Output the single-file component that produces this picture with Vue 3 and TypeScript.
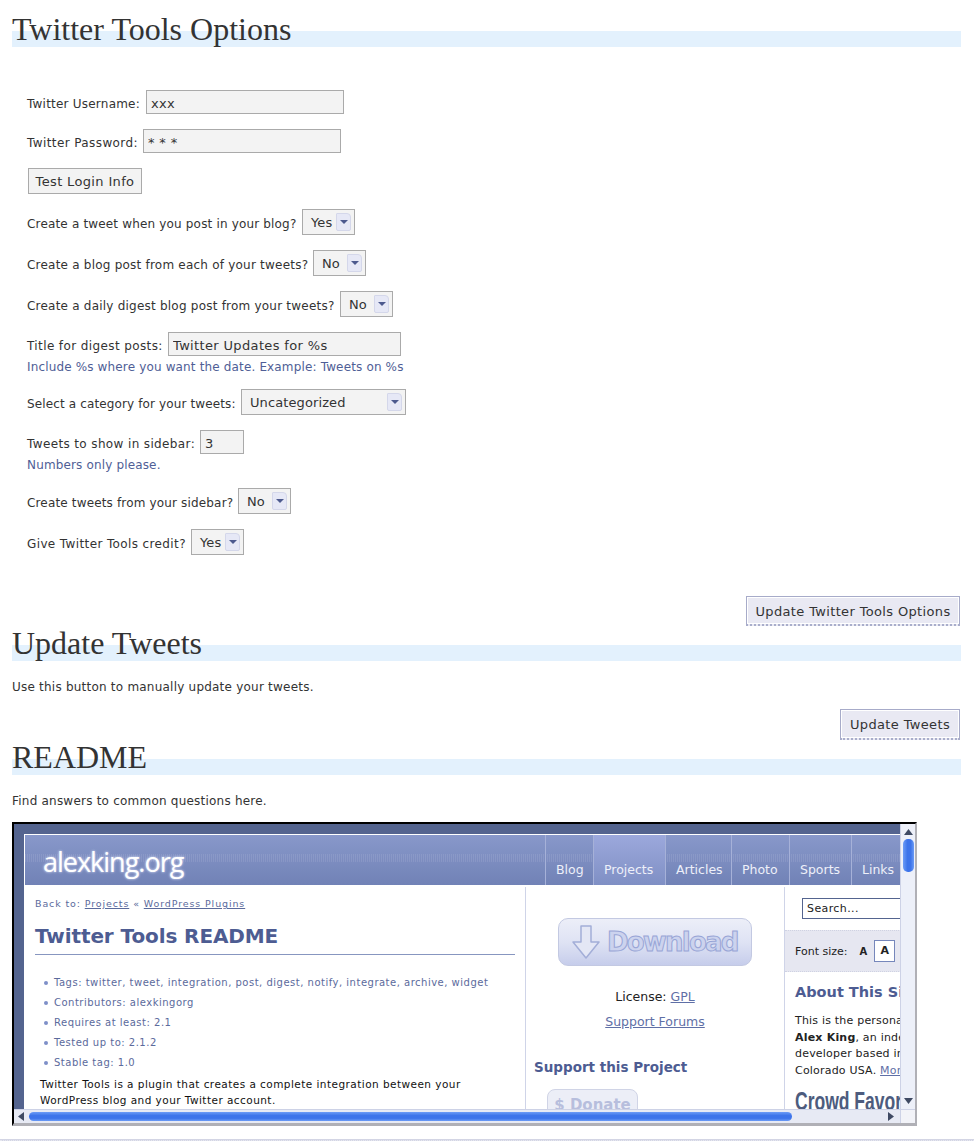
<script setup lang="ts">
interface Campo {
  label: string
  labelWidth: number
  spacing: number
  tipo: 'input' | 'select'
  valor: string
  ancho: number
  ayuda?: string
}

const camposCuenta: Campo[] = [
  { label: 'Twitter Username:', labelWidth: 114, spacing: 0.22, tipo: 'input', valor: 'xxx', ancho: 198 },
  { label: 'Twitter Password:', labelWidth: 111, spacing: 0.4, tipo: 'input', valor: '* * *', ancho: 198 },
]

const campos: Campo[] = [
  { label: 'Create a tweet when you post in your blog?', labelWidth: 270, spacing: 0.17, tipo: 'select', valor: 'Yes', ancho: 53 },
  { label: 'Create a blog post from each of your tweets?', labelWidth: 281, spacing: 0.22, tipo: 'select', valor: 'No', ancho: 53 },
  { label: 'Create a daily digest blog post from your tweets?', labelWidth: 308, spacing: 0.22, tipo: 'select', valor: 'No', ancho: 53 },
  {
    label: 'Title for digest posts:',
    labelWidth: 136,
    spacing: 0.39,
    tipo: 'input',
    valor: 'Twitter Updates for %s',
    ancho: 233,
    ayuda: 'Include %s where you want the date. Example: Tweets on %s',
  },
  { label: 'Select a category for your tweets:', labelWidth: 209, spacing: 0.13, tipo: 'select', valor: 'Uncategorized', ancho: 165 },
  {
    label: 'Tweets to show in sidebar:',
    labelWidth: 168,
    spacing: 0.37,
    tipo: 'input',
    valor: '3',
    ancho: 44,
    ayuda: 'Numbers only please.',
  },
  { label: 'Create tweets from your sidebar?', labelWidth: 206, spacing: 0.16, tipo: 'select', valor: 'No', ancho: 53 },
  { label: 'Give Twitter Tools credit?', labelWidth: 159, spacing: 0.38, tipo: 'select', valor: 'Yes', ancho: 53 },
]

const navItems = [
  { label: 'Blog', width: 48, active: false },
  { label: 'Projects', width: 72, active: true },
  { label: 'Articles', width: 66, active: false },
  { label: 'Photo', width: 58, active: false },
  { label: 'Sports', width: 62, active: false },
  { label: 'Links', width: 60, active: false },
]
const readmeMeta = [
  'Tags: twitter, tweet, integration, post, digest, notify, integrate, archive, widget',
  'Contributors: alexkingorg',
  'Requires at least: 2.1',
  'Tested up to: 2.1.2',
  'Stable tag: 1.0',
]
</script>

<template>
  <main class="main">
    <h2 class="titulo">Twitter Tools Options</h2>

    <form class="formulario" @submit.prevent>
      <div v-for="campo in camposCuenta" :key="campo.label" class="campo">
        <label :style="{ width: campo.labelWidth + 'px', letterSpacing: campo.spacing + 'px' }">{{ campo.label }}</label>
        <input class="input" :style="{ width: campo.ancho + 'px' }" :value="campo.valor" readonly>
      </div>
      <div class="campo">
        <button class="boton" type="button">Test Login Info</button>
      </div>
      <div v-for="campo in campos" :key="campo.label" class="grupo">
        <div class="campo">
          <label :style="{ width: campo.labelWidth + 'px', letterSpacing: campo.spacing + 'px' }">{{ campo.label }}</label>
          <input
            v-if="campo.tipo === 'input'"
            class="input"
            :style="{ width: campo.ancho + 'px' }"
            :value="campo.valor"
            readonly
          >
          <div v-else class="select" :style="{ width: campo.ancho + 'px' }">
            {{ campo.valor }}<span class="flecha"></span>
          </div>
        </div>
        <p v-if="campo.ayuda" class="ayuda">{{ campo.ayuda }}</p>
      </div>
    </form>

    <div class="acciones primera">
      <button class="enviar ancho" type="button">Update Twitter Tools Options</button>
    </div>

    <h2 class="titulo">Update Tweets</h2>
    <p class="texto">Use this button to manually update your tweets.</p>
    <div class="acciones">
      <button class="enviar corto" type="button">Update Tweets</button>
    </div>

    <h2 class="titulo">README</h2>
    <p class="texto">Find answers to common questions here.</p>

    <!-- captura del sitio dentro de un marco con barras de scroll -->
    <div class="marco">
      <div class="vista">
        <div class="pagina">
          <header class="cabecera">
            <div class="logo">alexking.org</div>
            <nav class="nav">
              <a
                v-for="item in navItems"
                :key="item.label"
                :class="{ activo: item.active }"
                :style="{ width: item.width + 'px' }"
              >{{ item.label }}</a>
            </nav>
          </header>
          <div class="columnas">
            <section class="col-a">
              <p class="migas">Back to: <u>Projects</u> « <u>WordPress Plugins</u></p>
              <h3 class="readme">Twitter Tools README</h3>
              <ul class="meta">
                <li v-for="linea in readmeMeta" :key="linea">{{ linea }}</li>
              </ul>
              <p class="parrafo">Twitter Tools is a plugin that creates a complete integration between your<br>WordPress blog and your Twitter account.</p>
            </section>
            <section class="col-b">
              <div class="descarga">
                <svg width="30" height="36" viewBox="0 0 30 36">
                  <path d="M10 2h10v16h8L15 34 2 18h8z" fill="#e4e7f5" stroke="#a3aed8" stroke-width="1.5" stroke-linejoin="round" />
                </svg>
                <span>Download</span>
              </div>
              <p class="licencia">License: <u>GPL</u></p>
              <p class="foro"><u>Support Forums</u></p>
              <h4 class="soporte">Support this Project</h4>
              <div class="donar">$ Donate</div>
            </section>
            <section class="col-c">
              <div class="buscar">Search...</div>
              <div class="fuente">
                <span>Font size:</span>
                <b class="a-chica">A</b>
                <b class="a-grande">A</b>
              </div>
              <div class="sobre">
                <h4>About This Site</h4>
                <p>This is the personal site of<br><b>Alex King</b>, an independent<br>developer based in Denver,<br>Colorado USA. <u>More...</u></p>
                <div class="crowd">Crowd Favorites</div>
              </div>
            </section>
          </div>
        </div>
      </div>

      <div class="scroll-v">
        <svg width="11" height="6" viewBox="0 0 11 6"><path d="M5.5 0 10 6H1z" fill="#3f4a63" /></svg>
        <div class="pulgar-v"></div>
        <svg width="11" height="6" viewBox="0 0 11 6"><path d="M1 0h9L5.500 6z" fill="#3f4a63" /></svg>
      </div>
      <div class="scroll-h">
        <svg width="6" height="11" viewBox="0 0 6 11"><path d="M0 5.500 6 1v9z" fill="#3f4a63" /></svg>
        <div class="pulgar-h"></div>
        <svg width="6" height="11" viewBox="0 0 6 11"><path d="M6 5.500 0 1v9z" fill="#3f4a63" /></svg>
      </div>
      <div class="esquina"></div>
    </div>

    <div class="pie"></div>
  </main>
</template>

<style>
html,
body {
  margin: 0;
  background: #fff;
}
</style>

<style scoped>
.main {
  font-family: 'DejaVu Sans', Verdana, sans-serif;
  font-size: 12px;
  letter-spacing: 0.22px;
  color: #333;
  padding: 12px 13px 0 12px;
  height: 1134px;
  overflow: hidden;
  position: relative;
}

.titulo {
  height: 35px;
  margin: 0;
  font-family: 'Liberation Serif', 'Times New Roman', serif;
  font-size: 32px;
  font-weight: normal;
  line-height: 35px;
  letter-spacing: 0;
  white-space: nowrap;
  background: linear-gradient(#e3f1fd, #e3f1fd) left bottom / 100% 16px no-repeat;
}

.formulario {
  display: flex;
  flex-direction: column;
  gap: 15px;
  margin-top: 43px;
  padding-left: 15px;
}

.campo {
  display: flex;
  align-items: center;
  gap: 5px;
}

.campo label {
  flex: none;
  padding-top: 3px;
  white-space: nowrap;
}

.input {
  box-sizing: border-box;
  height: 24px;
  padding: 2px 4px 0;
  border: 1px solid #aaa;
  background: #f3f3f3;
  font: 13px 'DejaVu Sans', Verdana, sans-serif;
  letter-spacing: 0.35px;
  color: #333;
  outline: none;
}

.boton {
  box-sizing: border-box;
  width: 114px;
  height: 26px;
  margin-left: 1px;
  padding: 0;
  border: 1px solid #aaa;
  background: #f3f3f3;
  font: 13px 'DejaVu Sans', Verdana, sans-serif;
  letter-spacing: 0.35px;
  color: #333;
}

.select {
  box-sizing: border-box;
  display: flex;
  align-items: center;
  justify-content: space-between;
  height: 26px;
  padding: 0 3px 0 8px;
  border: 1px solid #aaa;
  background: #f3f3f3;
  font-size: 13px;
  letter-spacing: 0.1px;
}

.flecha {
  box-sizing: border-box;
  display: flex;
  align-items: center;
  justify-content: center;
  width: 15px;
  height: 18px;
  border: 1px solid #d4d7ea;
  border-radius: 1px 4px 2px 2px;
  background: #e6e8f6;
}

.flecha::after {
  content: '';
  border-left: 4px solid transparent;
  border-right: 4px solid transparent;
  border-top: 4px solid #4d5a8e;
}

.ayuda {
  margin: 0;
  height: 18px;
  line-height: 22px;
  letter-spacing: 0.15px;
  color: #4f5e96;
  white-space: nowrap;
}

.grupo:nth-child(9) .ayuda {
  height: 19px;
}

.acciones {
  display: flex;
  justify-content: flex-end;
  padding-right: 1px;
  margin-top: 14px;
}

.primera {
  margin-top: 41px;
}

.enviar {
  box-sizing: border-box;
  padding: 1px 0 0;
  border: 1px solid #a7abc9;
  border-bottom: 2px dotted #a9aecb;
  box-shadow: inset 0 0 0 1px #fff;
  background: #e9e9f3;
  font: 13px 'DejaVu Sans', Verdana, sans-serif;
  letter-spacing: 0.35px;
  color: #333;
}

.ancho {
  width: 214px;
  height: 30px;
}

.corto {
  width: 120px;
  height: 31px;
}

.texto {
  margin: 17px 0 0;
  line-height: 18px;
}

.texto + .acciones {
  margin-top: 13px;
}

/* captura */
.marco {
  box-sizing: border-box;
  display: grid;
  grid-template-columns: 886px 15px;
  grid-template-rows: 285px 14px;
  width: 905px;
  height: 304px;
  margin-top: 12px;
  border-top: 2px solid #000;
  border-left: 2px solid #000;
  border-right: 2px solid #b0b0b6;
  border-bottom: 3px solid #b0b0b6;
  overflow: hidden;
  letter-spacing: 0;
}

.vista {
  overflow: hidden;
  background: #54648f;
  padding: 10px 0 0 10px;
}

.pagina {
  width: 960px;
  height: 280px;
  background: #fff;
  border-top: 1px solid #fff;
  border-left: 1px solid #fff;
}

.cabecera {
  display: flex;
  height: 50px;
  background:
    repeating-linear-gradient(90deg, rgba(255, 255, 255, 0.09) 0 1px, transparent 1px 2px) left 19px / 100% 8px no-repeat,
    linear-gradient(#8898ca, #7182b6);
}

.logo {
  flex: none;
  box-sizing: border-box;
  width: 520px;
  padding-left: 18px;
  font-family: 'Open Sans', sans-serif;
  font-size: 27px;
  line-height: 53px;
  letter-spacing: -1px;
  color: #fff;
  text-shadow: 0 0 3px #c3cbe8, 0 0 2px #c3cbe8;
}

.nav {
  display: flex;
}

.nav a {
  box-sizing: border-box;
  flex: none;
  height: 50px;
  padding: 0 0 0 10px;
  border-left: 1px solid #a6b1d8;
  line-height: 70px;
  font-size: 12.5px;
  color: #eef0f9;
}

.nav a.activo {
  background: linear-gradient(#9ca8dc, #7f8fc4);
}

.columnas {
  display: flex;
  height: 230px;
  overflow: hidden;
  padding-top: 2px;
}

.col-a {
  box-sizing: border-box;
  flex: none;
  width: 501px;
  padding: 0 10px 0 10px;
  border-right: 1px solid #cfd4e8;
  font-size: 10px;
  color: #5b6a9c;
}

.migas {
  margin: 9px 0 0;
  line-height: 16px;
  font-size: 9.5px;
  letter-spacing: 0.88px;
}

.readme {
  margin: 12px 0 0;
  padding-bottom: 6px;
  border-bottom: 1px solid #8796c0;
  font-size: 20px;
  line-height: 24px;
  color: #4d5c92;
  letter-spacing: -0.1px;
  white-space: nowrap;
}

.meta {
  margin: 18px 0 0;
  padding: 0 0 0 19px;
  list-style: none;
}

.meta li {
  position: relative;
  height: 20px;
  line-height: 20px;
  letter-spacing: 0.5px;
  white-space: nowrap;
}

.meta li::before {
  content: '';
  position: absolute;
  left: -10px;
  top: 8px;
  width: 4px;
  height: 4px;
  border-radius: 50%;
  background: #7e8fc8;
}

.parrafo {
  margin: 3px 0 0 5px;
  line-height: 16px;
  color: #111;
  font-size: 10.5px;
  letter-spacing: 0.45px;
  white-space: nowrap;
}

.col-b {
  box-sizing: border-box;
  flex: none;
  width: 259px;
  border-right: 1px solid #cfd4e8;
  text-align: center;
  color: #222;
  font-size: 12.5px;
}

.descarga {
  box-sizing: border-box;
  display: flex;
  align-items: center;
  gap: 6px;
  width: 194px;
  height: 48px;
  margin: 31px 0 0 32px;
  padding-left: 12px;
  border: 1px solid #c3c9e2;
  border-radius: 10px;
  background: linear-gradient(#eceef8, #dfe3f4 50%, #c6cdeb);
}

.descarga span {
  font-size: 26px;
  font-weight: bold;
  letter-spacing: -1.8px;
  color: #ccd3ee;
  -webkit-text-stroke: 1px #98a5d6;
}

.licencia {
  margin: 23px 0 0;
  line-height: 16px;
}

.licencia u,
.foro u {
  color: #5f6fa6;
}

.foro {
  margin: 9px 0 0;
  line-height: 16px;
}

.soporte {
  margin: 27px 0 0 8px;
  text-align: left;
  font-size: 13.5px;
  line-height: 20px;
  color: #4d5c92;
}

.donar {
  box-sizing: border-box;
  width: 91px;
  height: 34px;
  margin: 12px 0 0 21px;
  border: 1px solid #d0d4e6;
  border-radius: 8px;
  background: #eceef7;
  font-size: 15px;
  font-weight: bold;
  line-height: 30px;
  color: #b7bedd;
}

.col-c {
  flex: none;
  width: 200px;
  font-size: 11px;
  color: #222;
}

.buscar {
  box-sizing: border-box;
  width: 160px;
  height: 21px;
  margin: 11px 0 0 17px;
  padding-left: 4px;
  border: 1px solid #54648f;
  line-height: 19px;
  letter-spacing: 0.4px;
}

.fuente {
  display: flex;
  align-items: center;
  height: 40px;
  margin-top: 11px;
  padding-left: 10px;
  background: #e6e7f1;
  border-top: 1px dotted #cfd2e2;
  border-bottom: 1px dotted #cfd2e2;
}

.a-chica {
  margin-left: 12px;
  font-size: 10px;
}

.a-grande {
  box-sizing: border-box;
  width: 21px;
  height: 22px;
  margin-left: 7px;
  border: 1px solid #7687bb;
  background: #fff;
  text-align: center;
  line-height: 20px;
}

.sobre {
  padding-left: 10px;
  white-space: nowrap;
}

.sobre h4 {
  margin: 10px 0 0;
  font-size: 14.5px;
  line-height: 20px;
  color: #4d5c92;
}

.sobre p {
  margin: 11px 0 0;
  line-height: 16.500px;
  letter-spacing: 0.2px;
}

.sobre u {
  color: #5f6fa6;
}

.crowd {
  margin-top: 8px;
  font-family: 'Liberation Sans', Arial, sans-serif;
  font-size: 25px;
  font-weight: bold;
  line-height: 28px;
  color: #4d5c7e;
  transform: scaleX(0.7);
  transform-origin: left;
}

/* barras de scroll */
.scroll-v {
  display: flex;
  flex-direction: column;
  align-items: center;
  justify-content: space-between;
  padding: 5px 0 5px;
  border-left: 1px solid #cdd2e6;
  background: #edf0f9;
}

.pulgar-v {
  width: 11px;
  height: 33px;
  margin-top: 4px;
  margin-bottom: auto;
  border-radius: 5px;
  background: linear-gradient(90deg, #6c9cf6, #3d74ea 40%, #3d74ea 70%, #6c9cf6);
}

.scroll-h {
  display: flex;
  align-items: center;
  padding: 0 6px 0 4px;
  border-top: 1px solid #cdd2e6;
  background: #e7eaf4;
}

.pulgar-h {
  width: 763px;
  height: 9px;
  margin-left: 5px;
  margin-right: auto;
  border-radius: 5px;
  background: linear-gradient(#6c9cf6, #3d74ea 40%, #3d74ea 70%, #6c9cf6);
}

.esquina {
  background: #f2f3f8;
  border-left: 1px solid #cdd2e6;
  border-top: 1px solid #cdd2e6;
}

.pie {
  position: absolute;
  left: 0;
  right: 0;
  top: 1139px;
  height: 1px;
  background: #d3d5e4;
  border-bottom: 1px dotted #e6e7f0;
}
</style>
